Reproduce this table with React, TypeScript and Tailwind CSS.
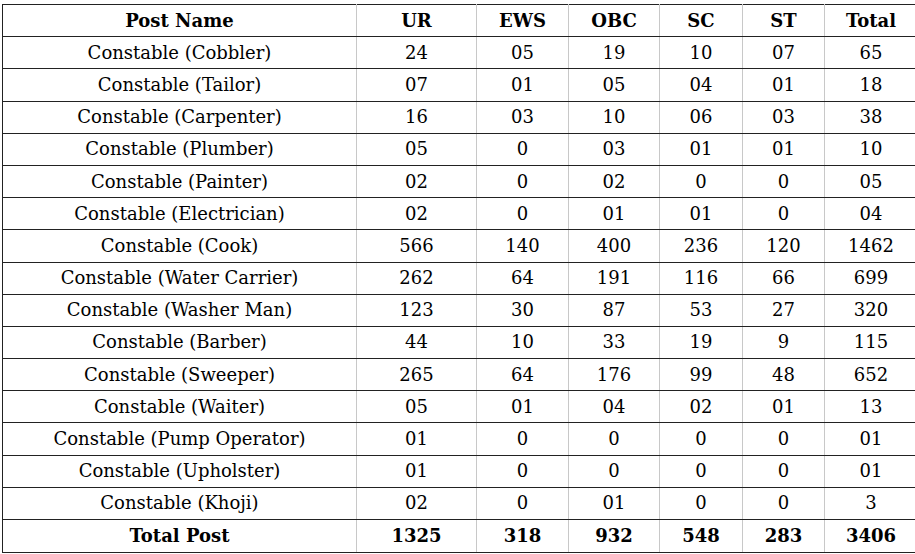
import React from "react";

const rows: [string, string, string, string, string, string, string][] = [
  ["Constable (Cobbler)", "24", "05", "19", "10", "07", "65"],
  ["Constable (Tailor)", "07", "01", "05", "04", "01", "18"],
  ["Constable (Carpenter)", "16", "03", "10", "06", "03", "38"],
  ["Constable (Plumber)", "05", "0", "03", "01", "01", "10"],
  ["Constable (Painter)", "02", "0", "02", "0", "0", "05"],
  ["Constable (Electrician)", "02", "0", "01", "01", "0", "04"],
  ["Constable (Cook)", "566", "140", "400", "236", "120", "1462"],
  ["Constable (Water Carrier)", "262", "64", "191", "116", "66", "699"],
  ["Constable (Washer Man)", "123", "30", "87", "53", "27", "320"],
  ["Constable (Barber)", "44", "10", "33", "19", "9", "115"],
  ["Constable (Sweeper)", "265", "64", "176", "99", "48", "652"],
  ["Constable (Waiter)", "05", "01", "04", "02", "01", "13"],
  ["Constable (Pump Operator)", "01", "0", "0", "0", "0", "01"],
  ["Constable (Upholster)", "01", "0", "0", "0", "0", "01"],
  ["Constable (Khoji)", "02", "0", "01", "0", "0", "3"],
];

const headers = ["Post Name", "UR", "EWS", "OBC", "SC", "ST", "Total"];
const totals = ["Total Post", "1325", "318", "932", "548", "283", "3406"];
const widths = ["w-[354px]", "w-[120px]", "w-[92px]", "w-[91px]", "w-[83px]", "w-[82px]", "w-[93px]"];

function Cell({
  children,
  bold,
  first,
  tall,
}: {
  children: React.ReactNode;
  bold?: boolean;
  first?: boolean;
  tall?: boolean;
}) {
  return (
    <td
      className={
        "p-0 text-center align-middle whitespace-nowrap border-t border-b border-t-[#222] border-b-[#222] border-r border-r-[#c8c8c8] " +
        (tall ? "h-[33px] " : "h-[32.2px] ") +
        (first ? "border-l border-l-[#222] " : "") +
        (bold ? "font-bold" : "font-normal")
      }
    >
      {children}
    </td>
  );
}

export default function App() {
  return (
    <div className="w-[915px] h-[554px] overflow-hidden bg-white pt-[4px] pl-[2px]">
      <table
        className="table-fixed border-collapse text-[18px] leading-none text-black w-[915px]"
        style={{ fontFamily: '"DejaVu Serif", "Liberation Serif", serif' }}
      >
        <colgroup>
          {widths.map((w, i) => (
            <col key={i} className={w} />
          ))}
        </colgroup>
        <thead>
          <tr>
            {headers.map((h, i) => (
              <Cell key={i} bold first={i === 0}>
                {h}
              </Cell>
            ))}
          </tr>
        </thead>
        <tbody>
          {rows.map((r, ri) => (
            <tr key={ri}>
              {r.map((c, ci) => (
                <Cell key={ci} first={ci === 0}>
                  {c}
                </Cell>
              ))}
            </tr>
          ))}
          <tr>
            {totals.map((c, ci) => (
              <Cell key={ci} bold tall first={ci === 0}>
                {c}
              </Cell>
            ))}
          </tr>
        </tbody>
      </table>
    </div>
  );
}
